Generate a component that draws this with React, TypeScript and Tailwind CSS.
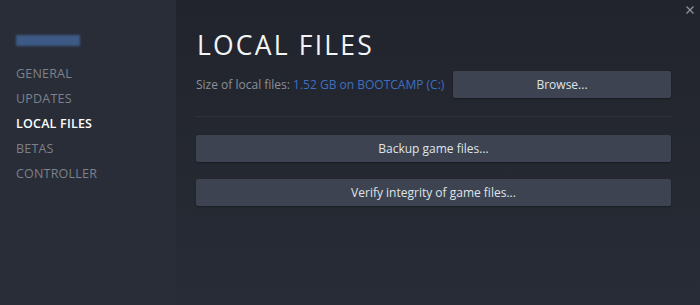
import React from "react"

const navItems = ["GENERAL", "UPDATES", "LOCAL FILES", "BETAS", "CONTROLLER"]

const ActionButton = ({ label, className = "" }: { label: string; className?: string }) => (
  <button
    className={`h-[27px] bg-[#3d4350] rounded-[2px] text-[12px] text-[#dfe3ea] shadow-[0_1px_2px_rgba(0,0,0,0.35)] ${className}`}
  >
    {label}
  </button>
)

export default function App() {
  return (
    <div
      className="w-[700px] h-[305px] flex overflow-hidden"
      style={{ fontFamily: '"Open Sans", "Liberation Sans", sans-serif' }}
    >
      {/* sidebar */}
      <div className="w-[176px] h-full bg-[#292d37] pl-4 pt-[35px] flex flex-col">
        <div className="w-[64px] h-[11px] bg-[#3f5f8e] blur-[1px] opacity-90 mb-[15px]" />
        <nav className="flex flex-col">
          {navItems.map(item => (
            <div
              key={item}
              className={`h-[25px] leading-[25px] text-[12.5px] tracking-[0.2px] ${
                item === "LOCAL FILES" ? "text-white font-semibold" : "text-[#7c818b]"
              }`}
            >
              {item}
            </div>
          ))}
        </nav>
      </div>

      {/* main */}
      <div className="relative flex-1 h-full bg-gradient-to-b from-[#21242c] to-[#282c36] pl-5 pr-[29px] pt-[28px]">
        <svg
          className="absolute right-[6px] top-[6px]"
          width="8"
          height="8"
          viewBox="0 0 8 8"
          stroke="#8a8f98"
          strokeWidth="1.4"
        >
          <path d="M0.5 0.5 L7.5 7.5 M7.5 0.5 L0.5 7.5" />
        </svg>
        <h1 className="text-[26.5px] leading-[34px] tracking-[2.2px] text-[#f3f4f6] ml-[1px]">LOCAL FILES</h1>
        <div className="flex items-center mt-[9px]">
          <p className="flex-1 text-[12px] text-[#8b9099]">
            Size of local files: <span className="text-[#3f6fc0]">1.52 GB on BOOTCAMP (C:)</span>
          </p>
          <ActionButton label="Browse..." className="w-[218px]" />
        </div>
        <div className="h-px bg-[#2e323c] mt-[18px]" />
        <div className="flex flex-col gap-[17px] mt-[18px]">
          <ActionButton label="Backup game files..." className="w-full" />
          <ActionButton label="Verify integrity of game files..." className="w-full" />
        </div>
      </div>
    </div>
  )
}
